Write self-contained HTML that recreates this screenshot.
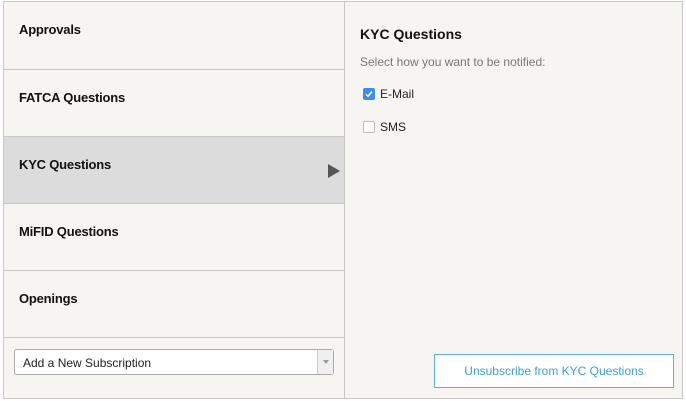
<!DOCTYPE html>
<html><head><style>
*{box-sizing:border-box;margin:0;padding:0}
body{width:686px;height:401px;background:#fff;font-family:"Liberation Sans",sans-serif;position:relative;overflow:hidden}
.frame{position:absolute;left:3px;top:1px;width:680px;height:398px;border:1px solid #c8c8c8;background:#f6f5f2}
.left{position:absolute;left:0;top:0;width:341px;height:396px;border-right:1px solid #c8c8c8}
.row{position:absolute;left:0;width:340px;height:68px;border-bottom:1px solid #c8c8c8;font-weight:bold;font-size:13px;color:#111;padding:20px 0 0 15px;letter-spacing:-0.2px}
.sel{background:#dcdcdc}
.arrow{position:absolute;right:4px;top:27px;width:0;height:0;border-left:12px solid #555;border-top:7px solid transparent;border-bottom:7px solid transparent}
.dd{position:absolute;left:14px;top:349px;width:320px;height:26px;border:1px solid #aaa;border-radius:3px;background:#fff;font-size:12px;color:#222;padding:6px 0 0 8px}
.dd .btn{position:absolute;right:0;top:0;width:16px;height:24px;border-left:1px solid #ccc;background:#efefef}
.dd .btn:after{content:"";position:absolute;left:5px;top:10px;border-top:4px solid #999;border-left:3px solid transparent;border-right:3px solid transparent}
.h{position:absolute;left:360px;top:26px;font-weight:bold;font-size:14px;color:#111}
.sub{position:absolute;left:360px;top:55px;font-size:12px;color:#777}
.cb{position:absolute;left:363px;width:12px;height:12px;border:1px solid #bbb;border-radius:2px;background:#fff}
.cb.on{background:#3d8ee8;border-color:#3d8ee8}
.lab{position:absolute;left:380px;font-size:12px;color:#222}
.ub{position:absolute;left:434px;top:354px;width:240px;height:34px;border:1px solid #5ab0e0;background:#fff;color:#3ea0d8;font-size:12px;text-align:center;line-height:32px}
</style></head><body>
<div class="frame">
<div class="left">
<div class="row" style="top:0">Approvals</div>
<div class="row" style="top:68px;height:67px">FATCA Questions</div>
<div class="row sel" style="top:135px;height:67px">KYC Questions<div class="arrow"></div></div>
<div class="row" style="top:202px;height:67px">MiFID Questions</div>
<div class="row" style="top:269px;height:67px">Openings</div>
</div>
</div>
<div class="dd">Add a New Subscription<div class="btn"></div></div>
<div class="h">KYC Questions</div>
<div class="sub">Select how you want to be notified:</div>
<div class="cb on" style="top:88px"><svg width="10" height="10" viewBox="0 0 10 10" style="position:absolute;left:0;top:0"><path d="M2 5.2L4 7.3L8 2.5" stroke="#fff" stroke-width="1.4" fill="none"/></svg></div>
<div class="lab" style="top:87px">E-Mail</div>
<div class="cb" style="top:121px"></div>
<div class="lab" style="top:120px">SMS</div>
<div class="ub">Unsubscribe from KYC Questions</div>
</body></html>
